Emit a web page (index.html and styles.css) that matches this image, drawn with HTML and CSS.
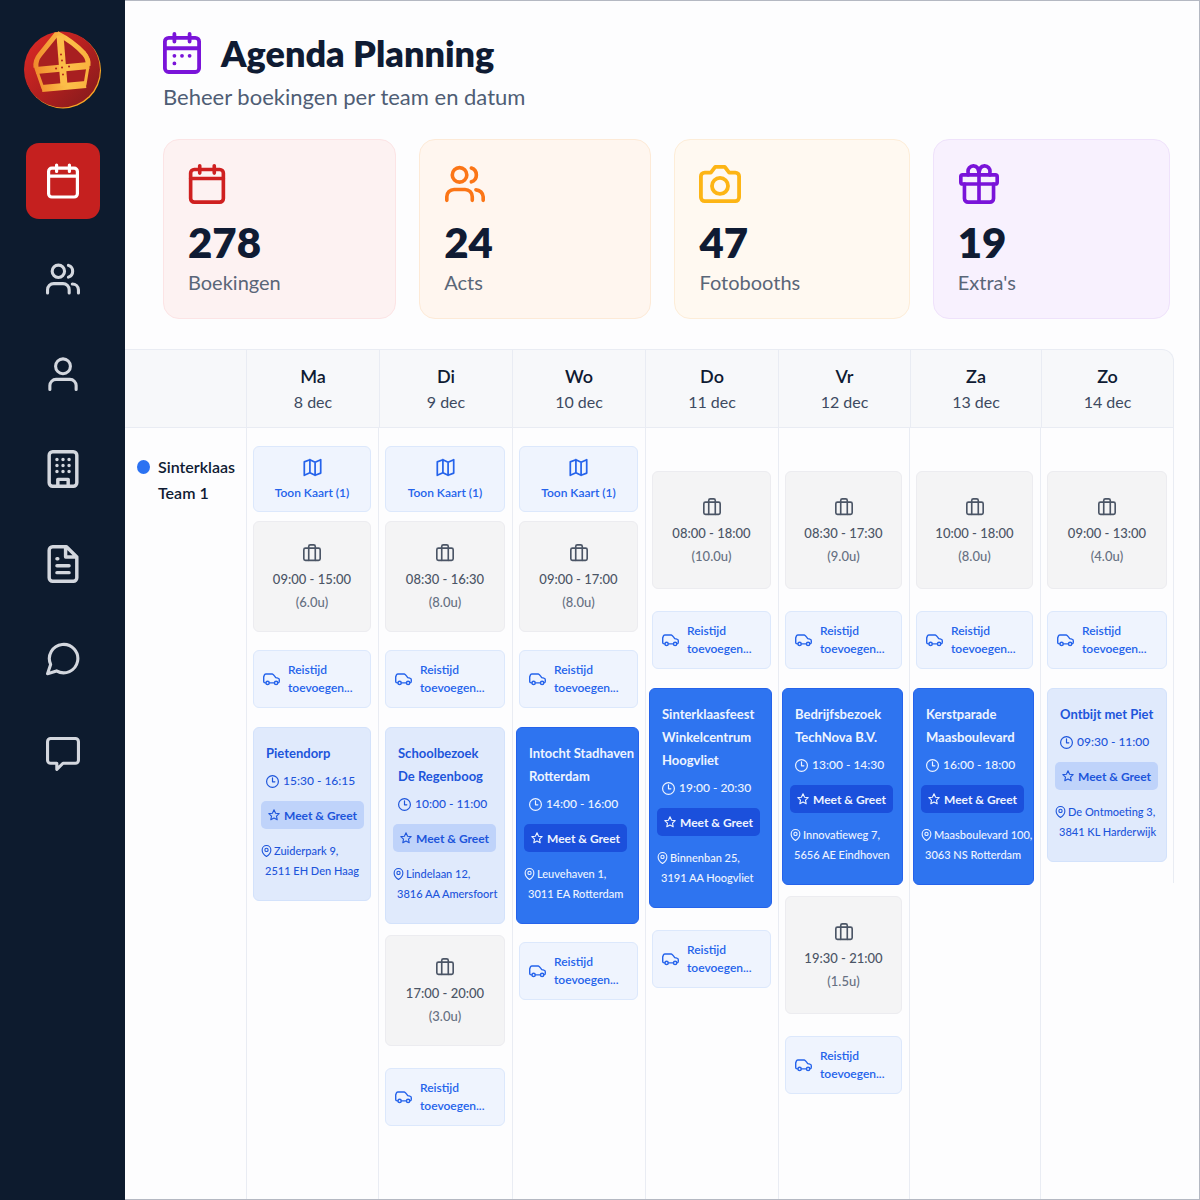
FILE: index.html
```html
<!DOCTYPE html>
<html lang="nl">
<head>
    <meta charset="UTF-8">
    <meta name="viewport" content="width=device-width, initial-scale=1.0">
    <title>Agenda Planning</title>
    <link rel="stylesheet" href="styles.css">
</head>
<body>

    <!-- Icons -->
    <svg class="sprite" aria-hidden="true">
        <symbol id="calendar" viewBox="2 1 20 22"><rect x="3" y="4" width="18" height="18" rx="2"/><path d="M8 2v4M16 2v4M3 9h18"/></symbol>
        <symbol id="calendar-days" viewBox="2 1 20 22"><rect x="3" y="4" width="18" height="18" rx="2"/><path d="M8 2v4M16 2v4M3 9.500h18M8 13.500h.01M12 13.500h.01M16 13.500h.01M8 17.500h.01"/></symbol>
        <symbol id="users" viewBox="1 1 22 22"><circle cx="9" cy="7" r="4"/><path d="M2 21v-2a4 4 0 0 1 4-4h6a4 4 0 0 1 4 4v2M15.500 3.200a4 4 0 0 1 0 7.600M18 15.200a4 4 0 0 1 4 3.800v2"/></symbol>
        <symbol id="user" viewBox="1 1 22 22"><circle cx="12" cy="7" r="4.800"/><path d="M3.500 22v-2.500a4 4 0 0 1 4-4h9a4 4 0 0 1 4 4V22"/></symbol>
        <symbol id="building" viewBox="1 1 22 22"><rect x="4" y="2" width="16" height="20" rx="2"/><path d="M9 22v-4h6v4M8.500 6.500h.01M12 6.500h.01M15.500 6.500h.01M8.500 10h.01M12 10h.01M15.500 10h.01M8.500 13.500h.01M12 13.500h.01M15.500 13.500h.01"/></symbol>
        <symbol id="file" viewBox="1 1 22 22"><path d="M14 2H6a2 2 0 0 0-2 2v16a2 2 0 0 0 2 2h12a2 2 0 0 0 2-2V8zM13.500 2v6H20M8.500 9h.5M8.500 13h7M8.500 17h7"/></symbol>
        <symbol id="chat" viewBox="1 1 22 22"><path d="M4 15.500a9.200 9.200 0 1 1 3.800 4.200L2 21.500z"/></symbol>
        <symbol id="message" viewBox="1 1 22 22"><path d="M4 2h16a2 2 0 0 1 2 2v12a2 2 0 0 1-2 2h-8l-4 4v-4H4a2 2 0 0 1-2-2V4a2 2 0 0 1 2-2z"/></symbol>
        <symbol id="camera" viewBox="1 2 22 20"><path d="M14.500 3h-5L7.200 6H4a2 2 0 0 0-2 2v11a2 2 0 0 0 2 2h16a2 2 0 0 0 2-2V8a2 2 0 0 0-2-2h-3.200z"/><circle cx="12" cy="13" r="4.200"/></symbol>
        <symbol id="gift" viewBox="1 1 22 22"><rect x="2" y="7" width="20" height="5" rx="1"/><path d="M4 12v8a2 2 0 0 0 2 2h12a2 2 0 0 0 2-2v-8M12 7v15M6 7V5.500a3 3 0 0 1 3-3.500c2 0 3 2 3 5M18 7V5.500a3 3 0 0 0-3-3.500c-2 0-3 2-3 5"/></symbol>
        <symbol id="map" viewBox="1 1 22 22"><path d="M2.500 5.500 9 3l6 3 6.500-3v15.500L15 21l-6-3-6.500 3zM9 3v15M15 6v15"/></symbol>
        <symbol id="case" viewBox="1 1 22 22"><rect x="2" y="6" width="20" height="15" rx="2"/><path d="M8 21V4a2 2 0 0 1 2-2h4a2 2 0 0 1 2 2v17"/></symbol>
        <symbol id="car" viewBox="0 3 24 18"><path d="M4 17.500H3a2 2 0 0 1-2-2V9l1-2.500A2 2 0 0 1 4 5h9c1 0 2 1 5 5l3 .8a2.500 2.500 0 0 1 2 2.400V15c0 1.500-.5 2.500-2 2.500M9 17.500h7"/><circle cx="6.500" cy="17.500" r="2.300"/><circle cx="18.500" cy="17.500" r="2.300"/></symbol>
        <symbol id="clock" viewBox="1 1 22 22"><circle cx="12" cy="12" r="10"/><path d="M12 6v6.500h4"/></symbol>
        <symbol id="star" viewBox="1 1 22 22"><path d="m12 2.500 2.900 6.200 6.600.8-4.900 4.600 1.300 6.700L12 17.500l-5.900 3.300 1.300-6.700L2.500 9.500l6.600-.8z"/></symbol>
        <symbol id="pin" viewBox="2 1 20 22"><path d="M20 10c0 5-5 10-8 12-3-2-8-7-8-12a8 8 0 0 1 16 0z"/><circle cx="12" cy="10" r="3"/></symbol>
    </svg>

    <aside class="sidebar">
        <a href="#" class="logo" aria-label="Home">
            <svg viewBox="0 0 78 78">
                <defs>
                    <linearGradient id="logoRed" x1="0" y1="0" x2="1" y2="1">
                        <stop offset="0" stop-color="#e02a26"/>
                        <stop offset="0.500" stop-color="#b3201f"/>
                        <stop offset="1" stop-color="#7f1a1c"/>
                    </linearGradient>
                    <linearGradient id="logoGold" gradientUnits="userSpaceOnUse" x1="10" y1="0" x2="66" y2="0">
                        <stop offset="0" stop-color="#f08a2c"/>
                        <stop offset="0.600" stop-color="#fcc04a"/>
                        <stop offset="1" stop-color="#f9b13d"/>
                    </linearGradient>
                </defs>
                <circle cx="39" cy="40" r="38" fill="#f9a825"/>
                <circle cx="38" cy="39" r="38" fill="url(#logoRed)"/>
                <path d="M33 3L16 24Q10 31 12 38L19 58L61 54L64 36Q66 29 60 22Q48 10 33 3z" fill="#a81f20" stroke="url(#logoGold)" stroke-width="3"/>
                <path d="M33 3L16 24Q11 30 12 37M33 3Q49 11 60 23Q65 29 64 35" fill="none" stroke="url(#logoGold)" stroke-width="5"/>
                <path d="M12 40l53-5M18 58l44-4" stroke="url(#logoGold)" stroke-width="7" fill="none"/>
                <path d="M36 5l4 50" stroke="#fcbd48" stroke-width="7"/>
                <path d="M37 24v.1M38 30v.1M32 38h.1M38 37h.1M45 36h.1M39 44v.1" stroke="#b3261e" stroke-width="2" stroke-linecap="round"/>
            </svg>
        </a>
        <nav class="menu">
            <a href="#" class="active" aria-label="Agenda"><svg class="menu-calendar"><use href="#calendar"/></svg></a>
            <a href="#" aria-label="Teams"><svg><use href="#users"/></svg></a>
            <a href="#" aria-label="Klanten"><svg><use href="#user"/></svg></a>
            <a href="#" aria-label="Bedrijven"><svg class="tall"><use href="#building"/></svg></a>
            <a href="#" aria-label="Documenten"><svg class="tall"><use href="#file"/></svg></a>
            <a href="#" aria-label="Chat"><svg><use href="#chat"/></svg></a>
            <a href="#" aria-label="Berichten"><svg><use href="#message"/></svg></a>
        </nav>
    </aside>

    <main class="content">
        <header class="page-header">
            <h1><svg><use href="#calendar-days"/></svg>Agenda Planning</h1>
            <p>Beheer boekingen per team en datum</p>
        </header>

        <section class="stats">
            <div class="stat red">
                <svg class="narrow"><use href="#calendar"/></svg>
                <strong>278</strong>
                <span>Boekingen</span>
            </div>
            <div class="stat orange">
                <svg><use href="#users"/></svg>
                <strong>24</strong>
                <span>Acts</span>
            </div>
            <div class="stat yellow">
                <svg><use href="#camera"/></svg>
                <strong>47</strong>
                <span>Fotobooths</span>
            </div>
            <div class="stat purple">
                <svg><use href="#gift"/></svg>
                <strong>19</strong>
                <span>Extra's</span>
            </div>
        </section>

        <table class="planning">
            <thead>
                <tr>
                    <td class="corner"></td>
                    <th scope="col">Ma<span>8 dec</span></th>
                    <th scope="col">Di<span>9 dec</span></th>
                    <th scope="col">Wo<span>10 dec</span></th>
                    <th scope="col">Do<span>11 dec</span></th>
                    <th scope="col">Vr<span>12 dec</span></th>
                    <th scope="col">Za<span>13 dec</span></th>
                    <th scope="col">Zo<span>14 dec</span></th>
                </tr>
            </thead>
            <tbody>
                <tr>
                    <th scope="row"><div class="team"><i class="dot"></i><span>Sinterklaas<br>Team 1</span></div></th>

                    <!-- Maandag -->
                    <td>
                        <button type="button" class="map"><svg><use href="#map"/></svg>Toon Kaart (1)</button>
                        <div class="work"><svg><use href="#case"/></svg>09:00 - 15:00<small>(6.0u)</small></div>
                        <button type="button" class="travel"><svg><use href="#car"/></svg><span>Reistijd<br>toevoegen...</span></button>
                        <article class="booking">
                            <h3>Pietendorp</h3>
                            <p class="time"><svg><use href="#clock"/></svg>15:30 - 16:15</p>
                            <span class="tag"><svg><use href="#star"/></svg>Meet &amp; Greet</span>
                            <address><svg><use href="#pin"/></svg>Zuiderpark 9,<span>2511 EH Den Haag</span></address>
                        </article>
                    </td>

                    <!-- Dinsdag -->
                    <td>
                        <button type="button" class="map"><svg><use href="#map"/></svg>Toon Kaart (1)</button>
                        <div class="work"><svg><use href="#case"/></svg>08:30 - 16:30<small>(8.0u)</small></div>
                        <button type="button" class="travel"><svg><use href="#car"/></svg><span>Reistijd<br>toevoegen...</span></button>
                        <article class="booking">
                            <h3>Schoolbezoek<br>De Regenboog</h3>
                            <p class="time"><svg><use href="#clock"/></svg>10:00 - 11:00</p>
                            <span class="tag"><svg><use href="#star"/></svg>Meet &amp; Greet</span>
                            <address><svg><use href="#pin"/></svg>Lindelaan 12,<span>3816 AA Amersfoort</span></address>
                        </article>
                        <div class="work"><svg><use href="#case"/></svg>17:00 - 20:00<small>(3.0u)</small></div>
                        <button type="button" class="travel"><svg><use href="#car"/></svg><span>Reistijd<br>toevoegen...</span></button>
                    </td>

                    <!-- Woensdag -->
                    <td>
                        <button type="button" class="map"><svg><use href="#map"/></svg>Toon Kaart (1)</button>
                        <div class="work"><svg><use href="#case"/></svg>09:00 - 17:00<small>(8.0u)</small></div>
                        <button type="button" class="travel"><svg><use href="#car"/></svg><span>Reistijd<br>toevoegen...</span></button>
                        <article class="booking solid">
                            <h3>Intocht Stadhaven<br>Rotterdam</h3>
                            <p class="time"><svg><use href="#clock"/></svg>14:00 - 16:00</p>
                            <span class="tag"><svg><use href="#star"/></svg>Meet &amp; Greet</span>
                            <address><svg><use href="#pin"/></svg>Leuvehaven 1,<span>3011 EA Rotterdam</span></address>
                        </article>
                        <button type="button" class="travel"><svg><use href="#car"/></svg><span>Reistijd<br>toevoegen...</span></button>
                    </td>

                    <!-- Donderdag -->
                    <td class="no-map">
                        <div class="work"><svg><use href="#case"/></svg>08:00 - 18:00<small>(10.0u)</small></div>
                        <button type="button" class="travel"><svg><use href="#car"/></svg><span>Reistijd<br>toevoegen...</span></button>
                        <article class="booking solid">
                            <h3>Sinterklaasfeest<br>Winkelcentrum<br>Hoogvliet</h3>
                            <p class="time"><svg><use href="#clock"/></svg>19:00 - 20:30</p>
                            <span class="tag"><svg><use href="#star"/></svg>Meet &amp; Greet</span>
                            <address><svg><use href="#pin"/></svg>Binnenban 25,<span>3191 AA Hoogvliet</span></address>
                        </article>
                        <button type="button" class="travel"><svg><use href="#car"/></svg><span>Reistijd<br>toevoegen...</span></button>
                    </td>

                    <!-- Vrijdag -->
                    <td class="no-map">
                        <div class="work"><svg><use href="#case"/></svg>08:30 - 17:30<small>(9.0u)</small></div>
                        <button type="button" class="travel"><svg><use href="#car"/></svg><span>Reistijd<br>toevoegen...</span></button>
                        <article class="booking solid">
                            <h3>Bedrijfsbezoek<br>TechNova B.V.</h3>
                            <p class="time"><svg><use href="#clock"/></svg>13:00 - 14:30</p>
                            <span class="tag"><svg><use href="#star"/></svg>Meet &amp; Greet</span>
                            <address><svg><use href="#pin"/></svg>Innovatieweg 7,<span>5656 AE Eindhoven</span></address>
                        </article>
                        <div class="work"><svg><use href="#case"/></svg>19:30 - 21:00<small>(1.5u)</small></div>
                        <button type="button" class="travel"><svg><use href="#car"/></svg><span>Reistijd<br>toevoegen...</span></button>
                    </td>

                    <!-- Zaterdag -->
                    <td class="no-map">
                        <div class="work"><svg><use href="#case"/></svg>10:00 - 18:00<small>(8.0u)</small></div>
                        <button type="button" class="travel"><svg><use href="#car"/></svg><span>Reistijd<br>toevoegen...</span></button>
                        <article class="booking solid">
                            <h3>Kerstparade<br>Maasboulevard</h3>
                            <p class="time"><svg><use href="#clock"/></svg>16:00 - 18:00</p>
                            <span class="tag"><svg><use href="#star"/></svg>Meet &amp; Greet</span>
                            <address><svg><use href="#pin"/></svg>Maasboulevard 100,<span>3063 NS Rotterdam</span></address>
                        </article>
                    </td>

                    <!-- Zondag -->
                    <td class="no-map">
                        <div class="work"><svg><use href="#case"/></svg>09:00 - 13:00<small>(4.0u)</small></div>
                        <button type="button" class="travel"><svg><use href="#car"/></svg><span>Reistijd<br>toevoegen...</span></button>
                        <article class="booking">
                            <h3>Ontbijt met Piet</h3>
                            <p class="time"><svg><use href="#clock"/></svg>09:30 - 11:00</p>
                            <span class="tag"><svg><use href="#star"/></svg>Meet &amp; Greet</span>
                            <address><svg><use href="#pin"/></svg>De Ontmoeting 3,<span>3841 KL Harderwijk</span></address>
                        </article>
                    </td>
                </tr>
            </tbody>
        </table>
    </main>

</body>
</html>
```

FILE: styles.css
```css
* {
    box-sizing: border-box;
}

body {
    margin: 0;
    display: flex;
    min-height: 100vh;
    font-family: Lato, "Open Sans", sans-serif;
    color: #0f1b33;
    background-color: #fdfdfe;
}

h1, h3, p {
    margin: 0;
}

svg {
    display: block;
    flex: none;
    fill: none;
    stroke: currentColor;
    stroke-width: 2;
    stroke-linecap: round;
    stroke-linejoin: round;
}

.sprite {
    display: none;
}

/* Sidebar */
.sidebar {
    flex: none;
    width: 125px;
    padding-top: 30px;
    background-color: #0d1b2e;
    display: flex;
    flex-direction: column;
    align-items: center;
}

.logo svg {
    width: 78px;
    height: 79px;
    stroke: none;
    stroke-linecap: butt;
}

.menu {
    margin-top: 34px;
    display: flex;
    flex-direction: column;
    gap: 19px;
}

.menu a {
    width: 74px;
    height: 76px;
    border-radius: 13px;
    display: flex;
    align-items: center;
    justify-content: center;
    color: #d3d7de;
}

.menu a.active {
    margin-bottom: 3px;
    background-color: #c5201f;
    color: #fff;
}

.menu svg {
    width: 34px;
    height: 34px;
}

.menu svg.menu-calendar {
    width: 32px;
    height: 36px;
}

.menu svg.tall {
    width: 38px;
    height: 38px;
}

/* Content */
.content {
    flex: 1;
    min-width: 0;
    display: flex;
    flex-direction: column;
    border: 1px solid #b4b8c2;
    border-left: none;
}

.page-header {
    padding: 30px 38px 0;
}

.page-header h1 {
    display: flex;
    align-items: center;
    gap: 20px;
    font-size: 36px;
    line-height: 44px;
    font-weight: 800;
}

.page-header h1 svg {
    width: 38px;
    height: 42px;
    color: #7a14d9;
}

.page-header p {
    margin-top: 9px;
    font-size: 22px;
    line-height: 26px;
    color: #4f5d75;
}

.stats {
    display: grid;
    grid-template-columns: 233fr 232fr 235fr 237fr;
    gap: 23px;
    margin: 29px 29px 30px 38px;
}

.stat {
    height: 180px;
    padding: 24px;
    border: 1px solid;
    border-radius: 16px;
    display: flex;
    flex-direction: column;
}

.stat svg {
    width: 42px;
    height: 40px;
}

.stat svg.narrow {
    width: 38px;
}

.stat strong {
    margin-top: 12px;
    font-size: 42px;
    line-height: 52px;
    font-weight: 800;
    color: #0f1b33;
}

.stat span {
    font-size: 20px;
    line-height: 28px;
    color: #5a6678;
}

.red {
    background-color: #fdf2f2;
    border-color: #fce4e5;
    color: #cf2020;
}

.orange {
    background-color: #fff6ef;
    border-color: #fdead7;
    color: #fb7516;
}

.yellow {
    background-color: #fff9f1;
    border-color: #fdedd8;
    color: #fdb515;
}

.purple {
    background-color: #f8f1fe;
    border-color: #efe2fb;
    color: #7a14d9;
}

/* Planning */
.planning {
    flex: 1;
    display: grid;
    grid-template-rows: 79px 1fr;
    margin-right: 25px;
}

.planning thead, .planning tbody {
    display: grid;
}

.planning tr {
    display: grid;
    grid-template-columns: 121fr 133fr 133fr 133fr 133fr 132fr 131fr 132fr;
}

.planning tbody tr {
    grid-template-columns: 121fr 132fr 134fr 133fr 133fr 131fr 131fr 134fr;
}

.planning th, .planning td {
    min-width: 0;
    padding: 0;
    border-left: 1px solid #e9ecf3;
}

.planning th:first-child, .planning td:first-child {
    border-left: none;
}

.planning thead tr {
    background-color: #f7f8fa;
    border: 1px solid #e9ecf3;
    border-left: none;
    border-top-right-radius: 12px;
}

.planning thead th {
    padding-top: 13px;
    font-size: 18px;
    line-height: 26px;
    font-weight: 600;
    text-align: center;
}

.planning thead span {
    display: block;
    font-size: 16px;
    font-weight: normal;
    color: #3d4a61;
}

.team {
    display: flex;
    gap: 8px;
    padding: 26px 0 0 12px;
    font-size: 16px;
    line-height: 26px;
    font-weight: 600;
    text-align: left;
}

.dot {
    width: 13px;
    height: 14px;
    margin-top: 6px;
    border-radius: 50%;
    background-color: #2b72f2;
}

.planning tbody td {
    display: flex;
    flex-direction: column;
    padding: 18px 7px 0 6px;
}

.planning tbody td.no-map {
    padding-top: 43px;
}

/* the outer line stops below the last booking */
.planning tbody td:last-child {
    background: linear-gradient(#e9ecf3, #e9ecf3) right top / 1px 455px no-repeat;
}

.map, .work, .travel, .booking {
    border: 1px solid #dce8fc;
    border-radius: 6px;
}

.map, .travel {
    font-family: inherit;
    font-size: 12px;
    font-weight: 600;
    color: #2563eb;
    background-color: #eff4fe;
    cursor: pointer;
}

.map {
    height: 66px;
    padding: 1px 0 0;
    line-height: 18px;
    display: flex;
    flex-direction: column;
    align-items: center;
    justify-content: center;
    gap: 7px;
}

.map svg {
    width: 19px;
    height: 19px;
}

.work {
    height: 111px;
    padding-top: 5px;
    display: flex;
    flex-direction: column;
    align-items: center;
    justify-content: center;
    font-size: 13px;
    line-height: 23px;
    font-weight: 500;
    color: #4b5566;
    background-color: #f4f4f5;
    border-color: #ececf0;
}

.work svg {
    width: 18px;
    height: 18px;
    margin-bottom: 6px;
}

.work small {
    font-size: 13px;
    color: #667082;
}

.map + .work {
    margin-top: 9px;
}

.booking + .work {
    margin-top: 11px;
}

.no-map .work {
    height: 118px;
}

.travel {
    height: 58px;
    margin-top: 18px;
    padding: 0 0 0 9px;
    display: flex;
    align-items: center;
    gap: 8px;
    line-height: 18px;
    text-align: left;
    white-space: nowrap;
}

.travel svg {
    width: 17px;
    height: 14px;
}

.booking + .work + .travel,
.no-map .work + .travel,
.no-map .booking + .travel {
    margin-top: 22px;
}

.booking {
    margin-top: 19px;
    padding: 14px 0 19px 7px;
    white-space: nowrap;
    color: #1d55db;
    background-color: #e0eafc;
    border-color: #d3e2fb;
}

.booking h3 {
    margin-left: 5px;
    font-size: 13px;
    line-height: 23px;
    font-weight: bold;
}

.time {
    display: flex;
    align-items: center;
    gap: 4px;
    margin: 6px 0 10px 5px;
    font-size: 12px;
    line-height: 20px;
    font-weight: 500;
}

.time svg {
    width: 13px;
    height: 13px;
}

.tag {
    display: flex;
    align-items: center;
    gap: 4px;
    width: fit-content;
    height: 28px;
    padding: 0 7px;
    border-radius: 5px;
    font-size: 12px;
    font-weight: bold;
    background-color: #bfd3fa;
}

.tag svg {
    width: 12px;
    height: 12px;
}

.booking address {
    display: grid;
    grid-template-columns: 11px 1fr;
    column-gap: 2px;
    align-items: center;
    margin-top: 12px;
    font-size: 11px;
    line-height: 20px;
    font-style: normal;
    font-weight: 500;
}

.booking address svg {
    width: 11px;
    height: 12px;
}

.booking address span {
    grid-column: 1 / -1;
    margin-left: 4px;
}

.booking.solid {
    margin-left: -3px;
    margin-right: -1px;
    color: #eef4ff;
    background-color: #2e74f0;
    border-color: #2563eb;
}

.booking.solid .tag {
    background-color: #1b50dc;
}
```
